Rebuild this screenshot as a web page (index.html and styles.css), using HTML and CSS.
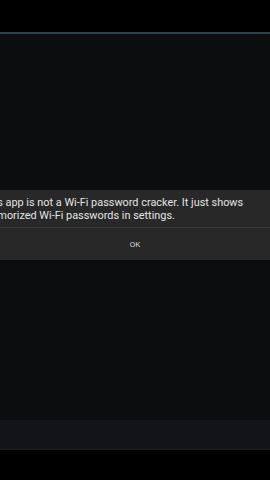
FILE: index.html
```html
<!DOCTYPE html>
<html lang="en">
<head>
    <meta charset="UTF-8">
    <meta name="viewport" content="width=device-width, initial-scale=1.0">
    <title>WiFi Passwords</title>
    <link rel="stylesheet" href="styles.css">
</head>
<body>

    <div class="screen">
        <div class="title-bar"></div>
        <div class="content"></div>
        <div class="action-bar"></div>
        <div class="nav-bar"></div>

        <div class="dialog">
            <div class="dialog-message">This app is not a Wi-Fi password cracker. It just shows memorized Wi-Fi passwords in settings.</div>
            <div class="dialog-buttons">
                <button class="dialog-button">OK</button>
            </div>
        </div>
    </div>

</body>
</html>
```

FILE: styles.css
```css
body {
    margin: 0;
    background-color: #000;
    font-family: Roboto, "Noto Sans", sans-serif;
    overflow: hidden;
}
.screen {
    position: relative;
    width: 270px;
    height: 480px;
    display: flex;
    flex-direction: column;
}
.title-bar {
    height: 32px;
    background-color: #000;
    border-bottom: 2px solid #28434d;
}
.content {
    flex: 1;
    background-color: #0c0d0f;
}
.action-bar {
    height: 29px;
    background-color: #131417;
    border-bottom: 1px solid #1d1e21;
}
.nav-bar {
    height: 30px;
    background-color: #000;
}
/* dialog sits over the content, wider than the screen */
.dialog {
    position: absolute;
    top: 190px;
    left: -34px;
    width: 338px;
    background-color: #282828;
}
.dialog-message {
    padding: 6px 16px 5px 16px;
    font-size: 10.9px;
    line-height: 13px;
    color: #e4e4e4;
}
.dialog-buttons {
    border-top: 1px solid #3a3a3a;
    display: flex;
}
.dialog-button {
    flex: 1;
    height: 32px;
    border: none;
    background: none;
    color: #d4d4d4;
    font-family: Roboto, "Noto Sans", sans-serif;
    font-size: 8px;
    padding: 0;
}
```
